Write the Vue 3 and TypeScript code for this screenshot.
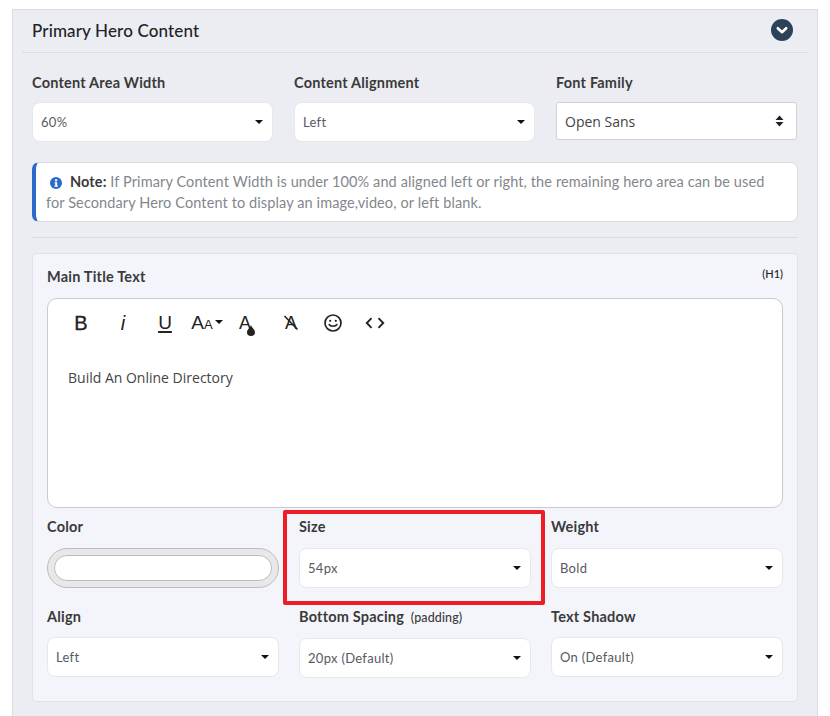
<script setup lang="ts">
interface Field {
  label: string
  small?: string
  value?: string
  color?: boolean
}

const topFields: Field[] = [
  { label: 'Content Area Width', value: '60%' },
  { label: 'Content Alignment', value: 'Left' },
]

const titleFields: Field[] = [
  { label: 'Color', color: true },
  { label: 'Size', value: '54px' },
  { label: 'Weight', value: 'Bold' },
  { label: 'Align', value: 'Left' },
  { label: 'Bottom Spacing', small: '(padding)', value: '20px (Default)' },
  { label: 'Text Shadow', value: 'On (Default)' },
]
</script>

<template>
  <div class="page">
    <section class="panel">
      <header class="panel-head">
        <h2>Primary Hero Content</h2>
        <span class="toggle">
          <svg width="22" height="22" viewBox="0 0 22 22">
            <circle cx="11" cy="11" r="11" fill="#2c4258" />
            <path d="M6.800 9.200 11 13.200l4.200-4" fill="none" stroke="#fff" stroke-width="2.600" stroke-linecap="round" stroke-linejoin="round" />
          </svg>
        </span>
      </header>

      <div class="panel-body">
        <div class="top-grid">
          <div v-for="f in topFields" :key="f.label" class="field">
            <label>{{ f.label }}</label>
            <div class="select"><span>{{ f.value }}</span><i class="caret"></i></div>
          </div>
          <div class="field">
            <label>Font Family</label>
            <div class="native-select">
              <span>Open Sans</span>
              <svg width="9" height="12" viewBox="0 0 9 12"><path d="M4.500 0.500 8.500 5H.5zM.5 7h8l-4 4.500z" fill="#222" /></svg>
            </div>
          </div>
        </div>

        <div class="note">
          <svg class="info" width="12" height="12" viewBox="0 0 12 12">
            <circle cx="6" cy="6" r="6" fill="#2a6bc9" />
            <rect x="5" y="2.300" width="2.200" height="2" fill="#fff" />
            <path d="M4.500 5.200h2.700v3.500h.8v1H4.400v-1h.8V6.200h-.7z" fill="#fff" />
          </svg>
          <strong>Note:</strong> If Primary Content Width is under 100% and aligned left or right, the remaining hero area can be used for Secondary Hero Content to display an image,video, or left blank.
        </div>

        <hr class="rule" />

        <div class="card">
          <div class="card-head">
            <label>Main Title Text</label>
            <span class="tag">(H1)</span>
          </div>

          <div class="editor">
            <div class="toolbar">
              <span class="tool tool-b">B</span>
              <span class="tool tool-i">i</span>
              <span class="tool tool-u">U</span>
              <span class="tool tool-size">A<small>A</small><i class="caret tiny"></i></span>
              <span class="tool tool-a fill">A
                <svg class="drop" width="8" height="11" viewBox="0 0 8 11"><path d="M4 0C3.400 2.500 0 4.500 0 7.200a4 3.800 0 0 0 8 0C8 4.500 4.600 2.500 4 0z" fill="#222" /></svg>
              </span>
              <span class="tool tool-a clear">A
                <svg class="strike" width="16" height="17" viewBox="0 0 16 17"><path d="M1.500 1 14.500 14.500" stroke="#222" stroke-width="1.600" fill="none" /></svg>
              </span>
              <span class="tool tool-svg">
                <svg width="18" height="18" viewBox="0 0 18 18" fill="none" stroke="#222" stroke-width="1.700">
                  <circle cx="9" cy="9" r="8" />
                  <path d="M5.200 10.600c1 2.200 6.600 2.200 7.600 0" stroke-linecap="round" />
                  <circle cx="6.200" cy="6.800" r="1.100" fill="#222" stroke="none" />
                  <circle cx="11.800" cy="6.800" r="1.100" fill="#222" stroke="none" />
                </svg>
              </span>
              <span class="tool tool-svg">
                <svg width="20" height="12" viewBox="0 0 20 12" fill="none" stroke="#222" stroke-width="1.900">
                  <path d="M6.500 1.200 1.800 6l4.700 4.800M13.500 1.200 18.200 6l-4.700 4.800" />
                </svg>
              </span>
            </div>
            <p class="editor-text">Build An Online Directory</p>
          </div>

          <div class="title-grid">
            <div v-for="f in titleFields" :key="f.label" class="field">
              <label>{{ f.label }} <small v-if="f.small">{{ f.small }}</small></label>
              <div v-if="f.color" class="swatch"><div class="swatch-in"></div></div>
              <div v-else class="select"><span>{{ f.value }}</span><i class="caret"></i></div>
            </div>
          </div>
        </div>
      </div>
    </section>
    <div class="highlight"></div>
  </div>
</template>

<style>
html, body { margin: 0; background: #fff; }
</style>

<style scoped>
.page {
  position: relative;
  width: 830px;
  height: 716px;
  overflow: hidden;
  box-sizing: border-box;
  padding: 9px 12px 0;
  font-family: "Lato", "Noto Sans", sans-serif;
  color: #3b3b3b;
}
.panel {
  width: 806px;
  min-height: 720px;
  box-sizing: border-box;
  background: #ebedf2;
  border: 1px solid #d9dce1;
  border-bottom: 0;
}
.panel-head {
  height: 42px;
  margin: 0 9px;
  border-bottom: 1px solid #d9dce1;
  display: flex;
  align-items: center;
  justify-content: space-between;
}
.panel-head h2 {
  margin: -2px 0 0 10px;
  font-size: 17px;
  font-weight: 500;
  color: #1f2328;
  letter-spacing: 0.14px;
}
.toggle { display: flex; margin-right: 15px; margin-top: -3px; }
.panel-body { padding: 20px 19px 0 19px; }
.top-grid {
  display: grid;
  grid-template-columns: repeat(3, 241px);
  column-gap: 21px;
}
label {
  display: block;
  font-size: 14.500px;
  font-weight: 700;
  line-height: 20px;
  color: #3a3a3a;
  letter-spacing: 0.2px;
}
label small { font-size: 12.500px; font-weight: 500; letter-spacing: 0.1px; margin-left: 3px; }
.select {
  box-sizing: border-box;
  height: 40px;
  background: #fff;
  border: 1px solid #e6e8ec;
  border-radius: 8px;
  display: flex;
  align-items: center;
  justify-content: space-between;
  padding: 0 9px 0 8px;
  font-size: 13px;
  color: #555a60;
  letter-spacing: 0.3px;
}
.top-grid .select { margin-top: 9px; }
.caret {
  width: 0;
  height: 0;
  border-left: 4px solid transparent;
  border-right: 4px solid transparent;
  border-top: 4px solid #111;
}
.native-select {
  box-sizing: border-box;
  height: 38px;
  margin-top: 9px;
  background: #fff;
  border: 1px solid #ced1d5;
  border-radius: 3px;
  display: flex;
  align-items: center;
  justify-content: space-between;
  padding: 0 12px 0 8px;
  font-family: "Open Sans", sans-serif;
  font-size: 14px;
  color: #444;
}
.note {
  box-sizing: border-box;
  height: 60px;
  margin-top: 20px;
  background: #fff;
  border: 1px solid #d9dce1;
  border-left: 4px solid #2a6bc9;
  border-radius: 7px;
  padding: 8px 24px 0 10px;
  font-size: 14.500px;
  line-height: 21px;
  color: #83878d;
  letter-spacing: 0.11px;
}
.note strong { color: #3a3a3a; font-weight: 700; }
.info { margin: 0 8px 0 4px; vertical-align: -2px; }
.rule {
  border: 0;
  border-top: 1px solid #d9dce1;
  margin: 15px 0;
}
.card {
  box-sizing: border-box;
  height: 449px;
  background: #f4f5fa;
  border: 1px solid #e0e2e7;
  border-radius: 4px;
  padding: 13px 14px 0;
}
.card-head {
  display: flex;
  justify-content: space-between;
  height: 31px;
}
.tag { font-size: 11px; color: #222; font-weight: 500; line-height: 12px; margin-top: 1px; }
.editor {
  box-sizing: border-box;
  height: 210px;
  background: #fff;
  border: 1px solid #c9cbd0;
  border-radius: 10px;
}
.toolbar {
  display: flex;
  align-items: center;
  height: 48px;
  color: #222;
  font-family: "Liberation Sans", sans-serif;
}
.tool {
  position: relative;
  display: flex;
  align-items: center;
  justify-content: center;
  width: 42px;
  font-size: 18px;
  height: 24px;
}
.toolbar .tool:first-child { margin-left: 12px; }
.tool-b { font-size: 20px; -webkit-text-stroke: 0.3px #222; }
.tool-i { font-style: italic; font-size: 20px; }
.tool-u { font-size: 19px; text-decoration: underline; text-decoration-thickness: 2px; text-underline-offset: 2px; }
.tool-size { font-size: 19px; }
.tool-size small { font-size: 13px; margin-top: 3px; }
.tiny { margin-left: 2px; margin-top: -3px; }
.tool-a { font-size: 18px; box-sizing: border-box; }
.fill { padding-right: 8px; }
.drop { position: absolute; left: 19px; top: 14px; }
.strike { position: absolute; left: 13px; top: 4px; }
.editor-text {
  margin: 21px 0 0 20px;
  font-family: "Open Sans", sans-serif;
  font-size: 14px;
  line-height: 19px;
  color: #444;
}
.title-grid {
  display: grid;
  grid-template-columns: repeat(3, 1fr);
  column-gap: 20px;
  margin-top: 9px;
}
.title-grid .field { height: 90px; }
.title-grid .select { margin-top: 11px; }
.title-grid .field:nth-child(n+4) .select { margin-top: 10px; }
.swatch {
  box-sizing: border-box;
  height: 40px;
  margin-top: 11px;
  padding: 6px 6px;
  background: #e8e8e8;
  border: 1px solid #bdbdbd;
  border-radius: 20px;
}
.swatch-in {
  box-sizing: border-box;
  height: 100%;
  background: #fff;
  border: 1px solid #bdbdbd;
  border-radius: 14px;
}
.highlight {
  position: absolute;
  left: 283px;
  top: 510px;
  width: 262px;
  height: 95px;
  box-sizing: border-box;
  border: 4px solid #ee1c25;
  border-radius: 2px;
}
</style>
